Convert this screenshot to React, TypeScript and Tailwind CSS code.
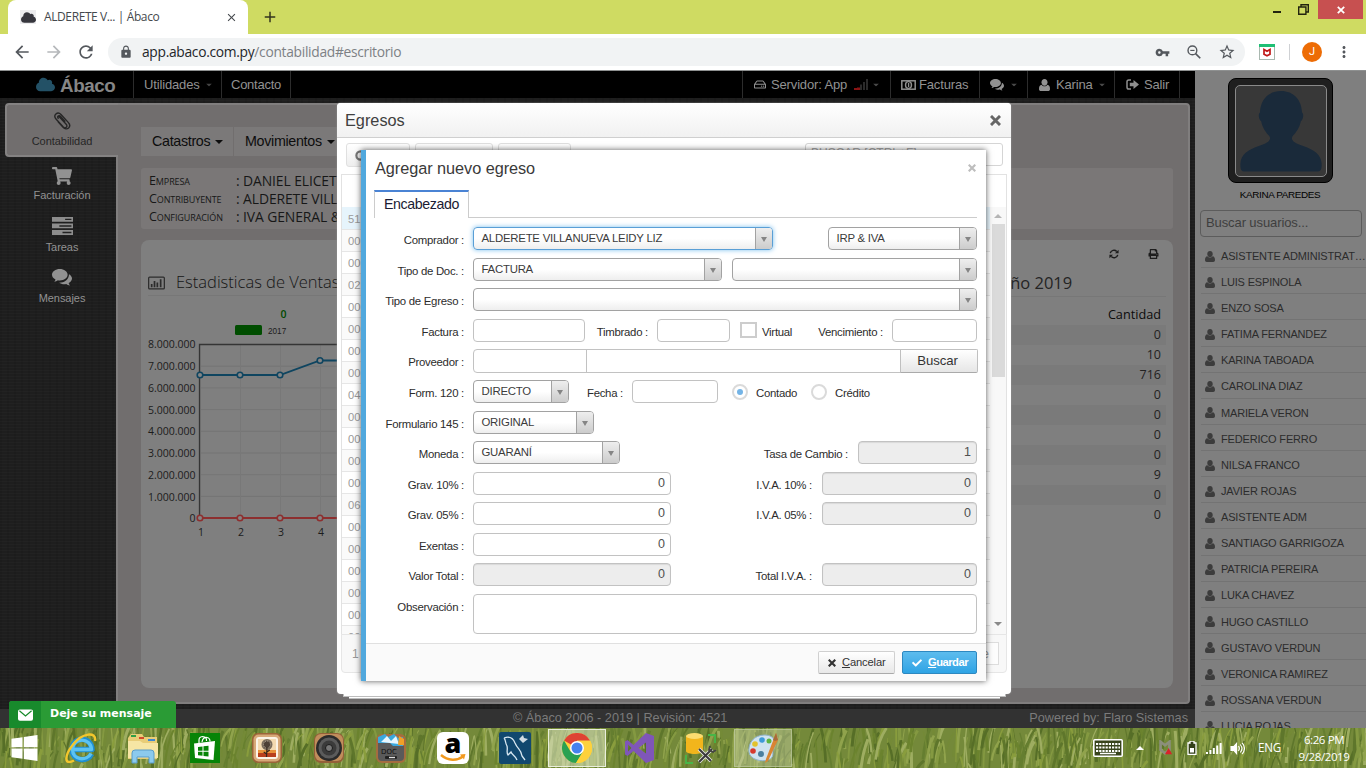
import React from "react";
import {
  MdArrowBack,
  MdArrowForward,
  MdRefresh,
  MdLock,
  MdVpnKey,
  MdStarBorder,
  MdMoreVert,
  MdClose,
  MdAdd,
} from "react-icons/md";
import { FaCloud, FaShoppingCart, FaRegHdd, FaPrint, FaCheck, FaAmazon } from "react-icons/fa";

const linen =
  "bg-[#1e1e1e] bg-[repeating-linear-gradient(0deg,rgba(255,255,255,0.02)_0_1px,transparent_1px_3px),repeating-linear-gradient(90deg,rgba(0,0,0,0.08)_0_2px,transparent_2px_7px)]";

function Caret({ className = "" }: { className?: string }) {
  return (
    <svg viewBox="0 0 8 4" className={`h-[4px] w-[8px] shrink-0 ${className}`}>
      <path d="M0 0h8L4 4z" fill="currentColor" />
    </svg>
  );
}

/* Thick cross with blunt corners */
function Cross({ className = "" }: { className?: string }) {
  return (
    <svg viewBox="0 0 12 12" className={className}>
      <path d="M2.2 2.2l7.6 7.6M9.8 2.2L2.2 9.8" stroke="currentColor" strokeWidth="3.2" strokeLinecap="square" />
    </svg>
  );
}

function UserIcon({ className = "" }: { className?: string }) {
  return (
    <svg viewBox="0 0 11 12" className={className} fill="currentColor">
      <path d="M5.500 0C7.300 0 8.500 1.300 8.500 3.200S7.300 6.700 5.500 6.700 2.500 5.100 2.500 3.200 3.700 0 5.500 0z" />
      <path d="M2.600 5.700C.8 5.900 0 7.500 0 9.900 0 11.200.8 12 2 12h7c1.200 0 2-.8 2-2.100 0-2.400-.8-4-2.600-4.200C7.600 6.700 6.700 7.200 5.500 7.200s-2.100-.5-2.900-1.500z" />
    </svg>
  );
}

function ChatIcon({ className = "" }: { className?: string }) {
  return (
    <svg viewBox="0 0 20 17" className={className} fill="currentColor">
      <path d="M7.800 0c4.300 0 7.800 2.500 7.800 5.700s-3.500 5.700-7.800 5.700c-.7 0-1.300-.1-1.900-.2-1 .8-2.300 1.400-3.700 1.500.7-.7 1.100-1.400 1.300-2.300C1.400 9.300 0 7.600 0 5.700 0 2.500 3.500 0 7.800 0z" />
      <path d="M17 5.200c1.800 1 3 2.600 3 4.400 0 1.900-1.300 3.500-3.400 4.500.2.900.7 1.700 1.400 2.400-1.500-.1-2.800-.7-3.800-1.500-.6.1-1.200.2-1.900.2-2 0-3.900-.6-5.200-1.500C12.400 13.700 17 10.300 17 5.200z" />
    </svg>
  );
}

/* ---------------- Browser ---------------- */

function Browser() {
  return (
    <header className="h-[70px] shrink-0">
      <div className="flex h-[34px] items-start bg-[#cfdb62]">
        <div className="ml-2 flex h-[34px] w-[240px] items-center rounded-t-lg bg-white">
          <span className="ml-[12px] flex h-[14px] w-[16px] items-center justify-center bg-[#ececee]">
            <FaCloud className="h-[15px] w-[15px] text-[#36363d]" />
          </span>
          <span className="ml-[8px] w-[171px] font-['Open_Sans',sans-serif] text-[12px] tracking-[-0.4px] text-[#45494d]">
            ALDERETE V... | Ábaco
          </span>
          <MdClose className="ml-[10px] h-[13px] w-[13px] text-[#45494d]" />
        </div>
        <MdAdd className="mt-[8px] ml-[13px] h-[18px] w-[18px] text-[#34361e]" />
        <div className="ml-auto flex h-[19px] items-center">
          <span className="mt-[5px] h-[2px] w-[8px] bg-[#22240f]" />
          <svg viewBox="0 0 11 11" className="ml-[17px] h-[11px] w-[11px]">
            <path d="M3 3V.7h7.3V8H8M.7 3h7.2v7.2H.7z" fill="none" stroke="#22240f" strokeWidth="1.4" />
          </svg>
          <span className="ml-[9px] flex h-[19px] w-[45px] items-center justify-center bg-[#c75050] text-white">
            <svg viewBox="0 0 8 8" className="h-[8px] w-[8px]">
              <path d="M.8.8l6.4 6.4M7.2.8L.8 7.2" stroke="#fff" strokeWidth="1.8" />
            </svg>
          </span>
          <span className="w-[3px]" />
        </div>
      </div>
      <div className="flex h-[36px] items-center bg-white text-[#54585d]">
        <MdArrowBack className="ml-[12px] h-[20px] w-[20px]" />
        <MdArrowForward className="ml-[12px] h-[20px] w-[20px] text-[#b5b8bb]" />
        <MdRefresh className="ml-[12px] h-[20px] w-[20px]" />
        <div className="ml-[12px] flex h-[28px] w-[1137px] items-center rounded-full bg-[#f1f3f4]">
          <MdLock className="ml-[11px] h-[14px] w-[14px]" />
          <span className="ml-[9px] font-['Open_Sans',sans-serif] text-[13.800px] tracking-[-0.3px] text-[#232629]">
            app.abaco.com.py<span className="text-[#7d8185]">/contabilidad#escritorio</span>
          </span>
          <MdVpnKey className="ml-auto h-[15px] w-[15px]" />
          <svg viewBox="0 0 15 15" className="ml-[17px] h-[14px] w-[14px]" fill="none" stroke="currentColor">
            <circle cx="5.800" cy="5.800" r="4.700" strokeWidth="1.500" />
            <path d="M9.200 9.200l5 5" strokeWidth="1.800" />
            <path d="M3.500 5.800h4.600" strokeWidth="1.200" />
          </svg>
          <MdStarBorder className="mr-[9px] ml-[17px] h-[18px] w-[18px]" />
        </div>
        <svg viewBox="0 0 16 16" className="ml-[14px] h-[16px] w-[16px]">
          <rect x=".5" y=".5" width="15" height="15" fill="#fff" stroke="#a9b8b0" />
          <rect width="16" height="3" fill="#1fbf75" />
          <path d="M5 5.500v4.700l3 1.600 3-1.600V5.500L8 7.200z" fill="none" stroke="#c01818" strokeWidth="1.700" />
        </svg>
        <span className="ml-[14px] h-[16px] w-px bg-[#cfd1d4]" />
        <span className="ml-[12px] flex h-[20px] w-[20px] items-center justify-center rounded-full bg-[#ed6c05] font-['Roboto',sans-serif] text-[11px] text-white">
          J
        </span>
        <MdMoreVert className="ml-[13px] h-[18px] w-[18px]" />
      </div>
    </header>
  );
}

/* ---------------- Application shell ---------------- */

const navCell = "flex h-full items-center border-l border-[#2c2c2c]";

function TopBar() {
  return (
    <nav className="flex h-[27px] shrink-0 items-center bg-black text-[13px] tracking-[-0.15px] text-[#929292]">
      <FaCloud className="ml-[36px] h-[19px] w-[19px] text-[#235166]" />
      <span className="mt-[4px] ml-[5px] w-[73px] text-[18.800px] font-bold tracking-[-0.4px] text-[#868686]">Ábaco</span>
      <div className={`${navCell} w-[88px] pl-[10px]`}>
        Utilidades
        <Caret className="ml-[5px] scale-75 text-[#444]" />
      </div>
      <div className={`${navCell} w-[69px] pl-[9px] tracking-[-0.25px]`}>Contacto</div>
      <div className={`${navCell} w-[452px]`} />
      <div className={`${navCell} w-[148px] pl-[11px]`}>
        <FaRegHdd className="h-[13px] w-[12px]" />
        <span className="ml-[5px]">Servidor: App</span>
        <svg viewBox="0 0 14 11" className="ml-[7px] h-[11px] w-[14px]">
          <path d="M0 11V9h3v2zM3 11V8.500h3V11z" fill="#8a1414" />
          <path d="M6 11V5.500h2V11zM9 11V3h2v8zM12 11V0h2v11z" fill="#2b2b2b" />
        </svg>
        <Caret className="ml-[4px] scale-75 text-[#4a4a4a]" />
      </div>
      <div className={`${navCell} w-[89px] pl-[10px]`}>
        <svg viewBox="0 0 15 10" className="h-[10px] w-[15px]">
          <rect x=".8" y=".8" width="13.400" height="8.400" fill="none" stroke="#8f8f8f" strokeWidth="1.500" />
          <ellipse cx="7.500" cy="5" rx="3.700" ry="4" fill="#8f8f8f" />
          <ellipse cx="7.500" cy="5" rx="2.200" ry="2.800" fill="#000" />
          <path d="M7.600 3v4" stroke="#8f8f8f" strokeWidth="1.300" />
        </svg>
        <span className="ml-[3px]">Facturas</span>
      </div>
      <div className={`${navCell} w-[48px] pl-[10px]`}>
        <ChatIcon className="h-[12px] w-[14px]" />
        <Caret className="ml-[6px] scale-75 text-[#4a4a4a]" />
      </div>
      <div className={`${navCell} w-[87px] pl-[11px]`}>
        <UserIcon className="h-[12px] w-[11px]" />
        <span className="ml-[6px]">Karina</span>
        <Caret className="ml-[5px] scale-75 text-[#4a4a4a]" />
      </div>
      <div className={`${navCell} w-[65px] pl-[11px]`}>
        <svg viewBox="0 0 13 11" className="h-[11px] w-[13px]">
          <path d="M5 .9H2.800Q1 .9 1 2.700v5.600q0 1.800 1.800 1.800H5" fill="none" stroke="#8f8f8f" strokeWidth="1.500" />
          <path d="M3.800 3.800h3.700V1L13 5.500 7.500 10V7.300H3.800z" fill="#8f8f8f" />
        </svg>
        <span className="ml-[5px]">Salir</span>
      </div>
      <div className={navCell} />
    </nav>
  );
}

function SideNav() {
  const item = "flex flex-col items-center text-[11px] tracking-[-0.05px]";
  return (
    <aside className="flex w-[111px] shrink-0 flex-col text-[#929292]">
      <div className={`${item} relative z-10 -mr-[2px] h-[54px] rounded-l-[4px] border-2 border-r-0 border-[#848282] bg-[#716e6e] pt-[7px] pr-[1px] text-[#262626]`}>
        <svg viewBox="0 0 18 18" className="h-[18px] w-[18px]" fill="none" stroke="#262626" strokeWidth="1.400" strokeLinecap="round">
          <path d="M6 4.500l7.200 7.800c1 1.100.9 2.300.1 3s-2 .7-3-.3L3.200 7.200C1.600 5.400 1.500 3.300 2.900 2s3.500-1.200 5.100.5l7.200 7.900c1.900 2 1.700 4.300.4 5.600-1.400 1.300-3.800 1.300-5.500-.6L5.300 10M5.200 6.200C4.500 5.300 4.700 4.500 5.200 4s1.400-.5 2.100.3l4.500 5" />
        </svg>
        <span className="mt-[3px]">Contabilidad</span>
      </div>
      <div className={`${item} mt-[10px] pl-[3px]`}>
        <FaShoppingCart className="h-[18px] w-[20px]" />
        <span className="mt-[2px]">Facturación</span>
      </div>
      <div className={`${item} mt-[13px] pl-[3px]`}>
        <svg viewBox="0 0 20 17" className="h-[18px] w-[21px]" fill="#8d8d8d">
          <path d="M0 0h20v4.500H0zM0 6.200h20v4.500H0zM0 12.400h20V17H0z" />
          <path d="M12.500 1.600h6v1.300h-6zM7 7.800h11.500v1.300H7zM10 14h8.500v1.300H10z" fill="#222" />
        </svg>
        <span className="mt-[4px]">Tareas</span>
      </div>
      <div className={`${item} mt-[14px] pl-[3px]`}>
        <ChatIcon className="h-[17px] w-[20px]" />
        <span className="mt-[4px]">Mensajes</span>
      </div>
    </aside>
  );
}

function SalesChart() {
  const ticks = ["8.000.000", "7.000.000", "6.000.000", "5.000.000", "4.000.000", "3.000.000", "2.000.000", "1.000.000", "0"];
  const xs = [59, 99, 139, 179];
  return (
    <svg viewBox="0 0 230 240" className="mt-[7px] h-[240px] w-[230px]" fontFamily="Open Sans, sans-serif" fontSize="10.500" fill="#1c1c1c">
      <text x="139.500" y="15" fill="#004a00" fontWeight="600">0</text>
      <rect x="94" y="22" width="27" height="10" rx="1.500" fill="#004d00" />
      <text x="127" y="31" fontSize="8.200" fontFamily="Liberation Sans">2017</text>
      {ticks.map((t, i) => (
        <g key={t}>
          <text x="54.500" y={45.300 + i * 21.750} textAnchor="end">{t}</text>
          <path d={`M59 ${41.500 + i * 21.700}H230`} stroke="#757575" strokeWidth="1" />
        </g>
      ))}
      {xs.map((x, i) => (
        <g key={x}>
          <path d={`M${x + 0.5} 41v174`} stroke="#787878" />
          <text x={x + 1} y="233" textAnchor="middle">{i + 1}</text>
        </g>
      ))}
      <path d="M230 41.500H58.500V215" fill="none" stroke="#353535" strokeWidth="1.300" />
      <path d="M59 72h80l40-14.500h51" fill="none" stroke="#0f4560" strokeWidth="1.800" />
      <path d="M59 215h171" stroke="#8d2f2f" strokeWidth="1.800" />
      {xs.map((x, i) => (
        <g key={x} fill="#858585" strokeWidth="1.600">
          <circle cx={x} cy={i === 3 ? 57.5 : 72} r="2.800" stroke="#0f4560" />
          <circle cx={x} cy="215" r="2.800" stroke="#8d2f2f" />
        </g>
      ))}
    </svg>
  );
}

function BarChartIcon() {
  return (
    <svg viewBox="0 0 18 14" className="h-[14px] w-[17px] shrink-0">
      <rect x=".7" y=".7" width="16.600" height="12.600" rx="1" fill="none" stroke="#2c2c2c" strokeWidth="1.300" />
      <path d="M3 8h1.800v3.500H3zM6 5h1.800v6.500H6zM9 6.500h1.800v5H9zM12.500 3h1.800v8.500h-1.800z" fill="#2c2c2c" />
    </svg>
  );
}

function RefreshIcon() {
  return (
    <svg viewBox="0 0 12 12" className="h-[10px] w-[10px]">
      <path d="M1.500 5A4.600 4.600 0 0 1 9.300 2.900M10.500 7A4.600 4.600 0 0 1 2.700 9.100" fill="none" stroke="#1d1d1d" strokeWidth="1.700" />
      <path d="M11.500.8v4.300H7.200zM.5 11.200V6.900h4.300z" fill="#1d1d1d" />
    </svg>
  );
}

const counts = ["0", "10", "716", "0", "0", "0", "0", "9", "0", "0"];
const info = [
  ["Empresa", "DANIEL ELICET"],
  ["Contribuyente", "ALDERETE VILL"],
  ["Configuración", "IVA GENERAL &"],
];

function Dashboard() {
  return (
    <main className="flex h-[601px] w-[1074px] flex-col rounded-r-[4px] border-2 border-[#807e7e] bg-[#716e6e] pt-[22px] pl-[23px]">
      <div className="flex h-[29px] gap-px text-[14.300px] tracking-[-0.32px] text-[#0d0d0d]">
        <span className="flex w-[92px] items-center bg-[#7b7979] pl-[11px]">
          Catastros <Caret className="ml-[5px]" />
        </span>
        <span className="flex w-[104px] items-center bg-[#7b7979] pl-[11px]">
          Movimientos <Caret className="ml-[5px]" />
        </span>
      </div>
      <div className="mt-[12px] flex h-[61px] w-[1032px] flex-col rounded-[3px] bg-[#7a7777] pt-[4px] pl-[8px] font-['Open_Sans',sans-serif] text-[13.900px] tracking-[-0.1px] text-[#171717]">
        {info.map(([k, v]) => (
          <div key={k} className="flex h-[18px] items-center whitespace-nowrap">
            <span className="w-[87px] text-[12.500px] [font-variant:small-caps]">{k}</span>
            <span>: {v}</span>
          </div>
        ))}
      </div>
      <section className="mt-[11px] flex h-[448px] w-[1032px] justify-between rounded-[8px] bg-[#7f7f7f]">
        <div className="flex w-[230px] flex-col">
          <div className="mt-[30px] ml-[7px] flex h-[26px] items-center border-b border-[#777] font-['Open_Sans',sans-serif] text-[16.500px] font-light whitespace-nowrap text-[#161616]">
            <BarChartIcon />
            <span className="ml-[11px]">Estadisticas de Ventas</span>
          </div>
          <SalesChart />
        </div>
        <div className="flex w-[172px] flex-col pr-[7px] font-['Open_Sans',sans-serif]">
          <div className="mt-[7px] flex h-[14px] items-center justify-end gap-[29px] pr-[7px]">
            <RefreshIcon />
            <FaPrint className="h-[10px] w-[11px] text-[#1d1d1d]" />
          </div>
          <div className="mt-[9px] flex h-[27px] items-center border-b border-[#777] text-[16.500px] text-[#242424]">año 2019</div>
          <div className="mt-[8px] flex h-[20px] items-center justify-end pr-[5px] text-[12.700px] text-[#0c0c0c]">Cantidad</div>
          {counts.map((c, i) => (
            <div
              key={i}
              className={`flex h-[20px] items-center justify-end pr-[5px] text-[12.500px] text-[#222] ${i % 2 ? "" : "bg-[#7a7a7a]"}`}
            >
              {c}
            </div>
          ))}
        </div>
      </section>
    </main>
  );
}

const users = [
  "ASISTENTE ADMINISTRAT…",
  "LUIS ESPINOLA",
  "ENZO SOSA",
  "FATIMA FERNANDEZ",
  "KARINA TABOADA",
  "CAROLINA DIAZ",
  "MARIELA VERON",
  "FEDERICO FERRO",
  "NILSA FRANCO",
  "JAVIER ROJAS",
  "ASISTENTE ADM",
  "SANTIAGO GARRIGOZA",
  "PATRICIA PEREIRA",
  "LUKA CHAVEZ",
  "HUGO CASTILLO",
  "GUSTAVO VERDUN",
  "VERONICA RAMIREZ",
  "ROSSANA VERDUN",
  "LUCIA ROJAS",
];

function Users() {
  return (
    <aside className="flex h-full w-[171px] flex-col overflow-hidden bg-[#7f7f7f]">
      <div className="mt-[7px] ml-[33px] flex h-[105px] w-[105px] shrink-0 items-center justify-center rounded-[8px] border border-black bg-[#1f1f1f]">
        <svg viewBox="0 0 92 92" className="h-[92px] w-[92px] overflow-hidden rounded-[5px] border border-[#8a8a8a] bg-[#383838]">
          <path
            d="M46 5c13 0 21 9 21.500 22 2 1 1.500 7-1.200 9-1.500 7-4.500 11-8.300 15-3 5 3 8 10 10 12 4 19 9 19.500 18 .3 7-1 8.500-5 8.500H9.500c-4 0-5.300-1.500-5-8.500C5 70 12 65 24 61c7-2 13-5 10-10-3.800-4-6.800-8-8.300-15-2.700-2-3.200-8-1.200-9C25 14 33 5 46 5z"
            fill="#1a2a3a"
          />
        </svg>
      </div>
      <span className="mt-[5px] h-[13px] shrink-0 pr-[1px] text-center text-[9.900px] leading-[13px] tracking-[-0.35px] text-black">KARINA PAREDES</span>
      <span className="mt-[9px] ml-[5px] flex h-[27px] w-[162px] shrink-0 items-center rounded-[4px] border border-[#5c5c5c] bg-[#7f7f7f] pb-[2px] pl-[5px] text-[13px] tracking-[-0.1px] text-[#3e3e3e]">
        Buscar usuarios...
      </span>
      <ul className="mt-[5px]">
        {users.map((u) => (
          <li key={u} className="ml-[6px] flex h-[26.130px] items-center border-b border-[#737373] pt-[3px] pl-[4px] text-[11px] tracking-[-0.17px] whitespace-nowrap text-[#2c2c2c]">
            <UserIcon className="h-[11px] w-[10px] shrink-0 text-[#3c3c3c]" />
            <span className="ml-[6px]">{u}</span>
          </li>
        ))}
      </ul>
    </aside>
  );
}

/* ---------------- Dialogs ---------------- */

const egresoRows = ["51", "00", "00", "02", "00", "00", "00", "00", "04", "00", "00", "00", "00", "06", "00", "00", "00", "00", "00", "00"];

function EgresosDialog() {
  const btn = "h-[24px] rounded-[3px] border border-[#e0e0e0] bg-gradient-to-b from-white to-[#eeeeee]";
  return (
    <div className="absolute top-[103px] left-[337px] flex w-[674px] flex-col items-center">
      <div className="flex h-[591px] w-full flex-col rounded-[4px] bg-white shadow-[0_0_2px_#999]">
        <div className="flex h-[35px] shrink-0 items-center justify-between rounded-t-[4px] border-b border-[#cfcfcf] bg-gradient-to-b from-white to-[#f1f1f1] pr-[10px] pl-[8px]">
          <span className="text-[16.300px] text-[#404040]">Egresos</span>
          <Cross className="h-[11px] w-[11px] text-[#666]" />
        </div>
        <div className="mt-[5px] flex h-[24px] px-[9px]">
          <span className={`${btn} flex w-[64px] items-center pl-[8px]`}>
            <svg viewBox="0 0 12 12" className="h-[11px] w-[11px]">
              <circle cx="6" cy="6" r="4.500" fill="none" stroke="#777" strokeWidth="2.400" />
            </svg>
          </span>
          <span className={`${btn} ml-[5px] w-[78px]`} />
          <span className={`${btn} ml-[5px] w-[73px]`} />
          <span className="mr-[-1px] ml-auto flex h-[23px] w-[198px] items-center rounded-[3px] border border-[#d5d5d5] pb-[4px] pl-[5px] text-[12px] text-[#aaa]">
            BUSCAR [CTRL+F]
          </span>
        </div>
        <div className="mt-[7px] ml-[4px] flex h-[461px] w-[666px] flex-col overflow-hidden border border-[#e2e2e2]">
          <div className="h-[32px] shrink-0" />
          <div className="flex h-[427px] overflow-hidden">
            <div className="w-[648px] text-[11.200px] text-[#9a9a9a]">
              {egresoRows.map((r, i) => (
                <div
                  key={i}
                  className={`flex items-center border-b border-[#e6e6e6] pt-[2px] pl-[6px] ${i === 0 ? "h-[23px] bg-[#e6f4fc]" : "h-[22px]"} ${i % 2 && i ? "bg-[#fafafa]" : ""}`}
                >
                  {r}
                </div>
              ))}
            </div>
            <div className="flex w-[16px] flex-col items-center bg-[#f8f8f8]">
              <Caret className="mt-[7px] rotate-180 text-[#b5b5b5]" />
              <div className="mt-[6px] h-[153px] w-[13px] bg-[#dadada]" />
              <Caret className="mt-auto mb-[8px] text-[#8a8a8a]" />
            </div>
          </div>
        </div>
        <div className="-mt-px ml-[4px] flex h-[39px] w-[666px] items-center justify-between rounded-b-[4px] border border-[#e6e6e6] bg-[#f8f8f8] pr-[7px] pl-[10px] text-[12px] text-[#999]">
          <span>1</span>
          <span className="flex h-[23px] w-[60px] items-center justify-end border border-[#ddd] bg-[#fdfdfd] pr-[9px] text-[12px]">e</span>
        </div>
      </div>
      <div className="h-[3px] w-[663px] border-x border-b border-[#bdbdbd] bg-white" />
      <div className="h-[2px] w-[651px] border-b border-[#bdbdbd] bg-white" />
    </div>
  );
}

function Label({ children, className = "w-[98px] mr-[9px]" }: { children: React.ReactNode; className?: string }) {
  return (
    <span className={`shrink-0 pt-[2.500px] text-right text-[11.400px] leading-[20px] tracking-[-0.28px] whitespace-nowrap text-[#2c2c2c] ${className}`}>
      {children}
    </span>
  );
}

function Select({ value = "", className, focus = false }: { value?: string; className: string; focus?: boolean }) {
  return (
    <span
      className={`flex h-[23px] shrink-0 overflow-hidden rounded-[4px] border bg-gradient-to-b from-white from-50% to-[#eeeeee] ${
        focus ? "border-[#5a9fd6] shadow-[0_0_5px_#7cc0ee]" : "border-[#a2a2a2]"
      } ${className}`}
    >
      <span className="flex-1 pl-[7.500px] text-[11.400px] leading-[21px] tracking-[-0.24px] whitespace-nowrap text-[#3c3c3c]">{value}</span>
      <span className="flex w-[17px] items-center justify-center border-l border-[#a2a2a2] bg-gradient-to-b from-[#eee] to-[#ccc]">
        <svg viewBox="0 0 6 5" className="mt-[2px] h-[5px] w-[6px]">
          <path d="M0 0h6L3 5z" fill="#858585" />
        </svg>
      </span>
    </span>
  );
}

function Field({ value = "", className, off = false }: { value?: string; className: string; off?: boolean }) {
  return (
    <span
      className={`h-[23px] shrink-0 rounded-[4px] border border-[#c2c2c2] pr-[5px] text-right text-[12.500px] leading-[20px] text-[#505050] ${
        off ? "bg-[#ededed] shadow-[inset_0_1px_1px_#d9d9d9]" : "bg-white"
      } ${className}`}
    >
      {value}
    </span>
  );
}

function Row({ h, children }: { h: string; children: React.ReactNode }) {
  return <div className={`flex items-start ${h}`}>{children}</div>;
}

function NuevoEgreso() {
  const btn = "flex h-[23px] items-center rounded-[2px] border text-[11.200px] tracking-[-0.150px]";
  return (
    <div className="absolute top-[150px] left-[361px] flex h-[531px] w-[625px] flex-col border-l-[5px] border-[#51a8dd] bg-white shadow-[0_0_6px_rgba(0,0,0,0.65)]">
      <div className="flex h-[40px] shrink-0 items-center justify-between pr-[10px] pl-[9px]">
        <span className="mt-[-3px] text-[16.300px] tracking-[-0.05px] text-[#3a3a3a]">Agregar nuevo egreso</span>
        <Cross className="mt-[-4px] h-[8px] w-[8px] text-[#bdbdbd]" />
      </div>
      <div className="mr-[9px] ml-[8px] flex h-[28px] shrink-0 border-b border-[#ccc]">
        <span className="h-[28px] w-[95px] border-x border-t-2 border-x-[#ccc] border-t-[#4a83d4] bg-white text-center text-[14.200px] leading-[25px] tracking-[-0.38px] text-[#1b1b33]">
          Encabezado
        </span>
      </div>
      <div className="mt-[9px] flex h-[416px] shrink-0 flex-col">
        <Row h="h-[31px]">
          <Label>Comprador :</Label>
          <Select focus value="ALDERETE VILLANUEVA LEIDY LIZ" className="w-[300px]" />
          <Select value="IRP & IVA" className="ml-[55px] w-[149px]" />
        </Row>
        <Row h="h-[30px]">
          <Label>Tipo de Doc. :</Label>
          <Select value="FACTURA" className="w-[249px]" />
          <Select className="ml-[10px] w-[245px]" />
        </Row>
        <Row h="h-[31px]">
          <Label>Tipo de Egreso :</Label>
          <Select className="w-[504px]" />
        </Row>
        <Row h="h-[30px]">
          <Label>Factura :</Label>
          <Field className="w-[112px]" />
          <Label className="mr-[9px] w-[63px]">Timbrado :</Label>
          <Field className="w-[73px]" />
          <span className="mt-[3px] ml-[10px] h-[16px] w-[17px] border-2 border-[#cdcdcd] bg-white" />
          <Label className="ml-[5px]">Virtual</Label>
          <Label className="mr-[9px] ml-auto">Vencimiento :</Label>
          <Field className="mr-[9px] w-[85px]" />
        </Row>
        <Row h="h-[31px]">
          <Label>Proveedor :</Label>
          <Field className="h-[24px] w-[114px] rounded-r-none" />
          <Field className="-ml-px h-[24px] w-[315px] rounded-none" />
          <span className="-ml-px h-[24px] w-[78px] rounded-r-[2px] border border-[#c0c0c0] border-b-[#aaa] bg-gradient-to-b from-white to-[#e6e6e6] pr-[3px] text-center text-[13.200px] leading-[21px] tracking-[-0.1px] text-[#333]">
            Buscar
          </span>
        </Row>
        <Row h="h-[31px]">
          <Label>Form. 120 :</Label>
          <Select value="DIRECTO" className="w-[96px]" />
          <Label className="mr-[9px] w-[54px]">Fecha :</Label>
          <Field className="w-[86px]" />
          <span className="mt-[4px] ml-[14px] flex h-[16px] w-[16px] items-center justify-center rounded-full border-2 border-[#dadada]">
            <span className="h-[6px] w-[6px] rounded-full bg-[#74b4e6]" />
          </span>
          <Label className="ml-[8px]">Contado</Label>
          <span className="mt-[4px] ml-[14px] h-[16px] w-[16px] rounded-full border-2 border-[#dadada]" />
          <Label className="ml-[8px]">Crédito</Label>
        </Row>
        <Row h="h-[30px]">
          <Label>Formulario 145 :</Label>
          <Select value="ORIGINAL" className="w-[121px]" />
        </Row>
        <Row h="h-[31px]">
          <Label>Moneda :</Label>
          <Select value="GUARANÍ" className="w-[147px]" />
          <Label className="mr-[10px] ml-auto">Tasa de Cambio :</Label>
          <Field off value="1" className="mr-[9px] w-[119px]" />
        </Row>
        <Row h="h-[30px]">
          <Label>Grav. 10% :</Label>
          <Field value="0" className="w-[198px]" />
          <Label className="mr-[10px] ml-auto">I.V.A. 10% :</Label>
          <Field off value="0" className="mr-[9px] w-[155px]" />
        </Row>
        <Row h="h-[31px]">
          <Label>Grav. 05% :</Label>
          <Field value="0" className="w-[198px]" />
          <Label className="mr-[10px] ml-auto">I.V.A. 05% :</Label>
          <Field off value="0" className="mr-[9px] w-[155px]" />
        </Row>
        <Row h="h-[30px]">
          <Label>Exentas :</Label>
          <Field value="0" className="w-[198px]" />
        </Row>
        <Row h="h-[31px]">
          <Label>Valor Total :</Label>
          <Field off value="0" className="w-[198px]" />
          <Label className="mr-[10px] ml-auto">Total I.V.A. :</Label>
          <Field off value="0" className="mr-[9px] w-[155px]" />
        </Row>
        <Row h="h-[49px]">
          <Label>Observación :</Label>
          <Field className="h-[40px] w-[504px]" />
        </Row>
      </div>
      <div className="flex h-[38px] shrink-0 items-center justify-end gap-[7px] border-t border-[#e0e0e0] bg-[#fafafa] pr-[9px]">
        <span className={`${btn} w-[77px] border-[#d0d0d0] border-b-[#aaa] bg-gradient-to-b from-white to-[#e8e8e8] pl-[9px] text-[#333]`}>
          <Cross className="mr-[6px] h-[8px] w-[8px]" />
          <span className="underline">C</span>ancelar
        </span>
        <span className={`${btn} w-[75px] border-[#2d88c0] bg-gradient-to-b from-[#5cbcee] to-[#2da3e4] pl-[9px] font-bold tracking-[-0.500px] text-white`}>
          <FaCheck className="mr-[6px] h-[10px] w-[10px]" />
          <span className="underline">G</span>uardar
        </span>
      </div>
    </div>
  );
}

/* ---------------- Taskbar ---------------- */

const grassTones = ["#4a6420", "#5f7a2c", "#8ba045", "#9dae55", "#748b36", "#b0bd72", "#566e26", "#93a63f", "#68812a"];

function Grass() {
  let seed = 17;
  const rnd = () => {
    seed = (seed * 16807) % 2147483647;
    return seed / 2147483647;
  };
  const blades = Array.from({ length: 1100 }, (_, i) => {
    const x = rnd() * 1380 - 5;
    const y = rnd() * 34 + 18;
    const lean = (rnd() - 0.35) * 18;
    const h = 14 + rnd() * 28;
    return (
      <path
        key={i}
        d={`M${x.toFixed(1)} ${y.toFixed(1)}q${(lean * 0.2).toFixed(1)} ${(-h * 0.6).toFixed(1)} ${lean.toFixed(1)} ${(-h).toFixed(1)}`}
        stroke={grassTones[Math.floor(rnd() * grassTones.length)]}
        strokeWidth={(1 + rnd() * 2.2).toFixed(1)}
      />
    );
  });
  return (
    <svg viewBox="0 0 1366 40" className="absolute inset-0 h-[40px] w-[1366px]" fill="none" opacity="0.7">
      {blades}
    </svg>
  );
}

function Tile({ children, open = "" }: { children: React.ReactNode; open?: string }) {
  return (
    <span className="flex h-[40px] w-[62px] items-center justify-center">
      <span className={`flex h-[38px] w-[58px] items-center justify-center ${open}`}>{children}</span>
    </span>
  );
}

const big = "h-[32px] w-[32px]";

function Taskbar() {
  return (
    <footer className="relative h-[40px] shrink-0 overflow-hidden bg-[#74893a]">
      <Grass />
      <div className="relative flex h-full items-center">
        <span className="flex w-[50px] pl-[11px]">
          <svg viewBox="0 0 26 26" className="h-[26px] w-[27px]" fill="#fff">
            <path d="M0 3.800L11 2.200v10.100H0zM12.300 2L26 0v12.300H12.300zM0 13.500h11v10.300L0 22.200zM12.300 13.500H26V26l-13.700-2z" />
          </svg>
        </span>
        <Tile>
          <svg viewBox="0 0 32 32" className={big} fill="none">
            <path d="M8 17.500H27C27 4 7 4 7 17.500c0 12 16 13 19.500 4.500" stroke="#1f8fd2" strokeWidth="5.400" strokeLinejoin="round" />
            <path d="M9 17.500H26.500C26 5 7.500 5 7.500 17.500c0 11 14.500 12 18.500 4" stroke="#5cc3f2" strokeWidth="3.400" strokeLinejoin="round" />
            <path d="M30 9c2-10-13-8-22 3.500S-1 34 9 28.500" stroke="#f3c62c" strokeWidth="2.400" />
          </svg>
        </Tile>
        <Tile>
          <svg viewBox="0 0 32 32" className={big}>
            <path d="M1 6l3-4h11l2 3h13v22H1z" fill="#e8cd77" />
            <path d="M4 3h5v2H4z" fill="#2e9e46" />
            <path d="M12 5h5v2h-5z" fill="#d14a2a" />
            <path d="M21 7h7v2h-7z" fill="#3f88cf" />
            <path d="M1 9h12l3 2h15v15H1z" fill="#f6e6a4" />
            <path d="M5 31V21q0-3 3-3h16q3 0 3 3v10h-5v-6H10v6z" fill="#8ccaed" stroke="#5a9cc8" />
          </svg>
        </Tile>
        <Tile>
          <svg viewBox="0 0 30 30" className="h-[30px] w-[30px]">
            <path d="M0 0h30v30H0z" fill="#078407" />
            <path d="M9 10V7q0-3 3.500-3.500Q17 4 16.500 8M12 9q1-5 5-4.500 3 .5 3 4" fill="none" stroke="#fff" strokeWidth="1.200" />
            <path d="M4 10.500l21-2.500-1.500 19L5 25z" fill="#fff" />
            <path d="M8 14l4.500-.5v4.300H8zM13.500 13.300l5-.5v5h-5zM8 18.700h4.500v4L8 22.300zM13.500 18.700h5v4.700l-5-.5z" fill="#078407" />
          </svg>
        </Tile>
        <Tile>
          <svg viewBox="0 0 30 30" className="h-[30px] w-[30px]">
            <rect width="30" height="30" rx="6" fill="#9b6438" />
            <rect x="1.500" y="1.500" width="27" height="27" rx="5" fill="#d7a878" />
            <rect x="4" y="4" width="22" height="22" rx="3" fill="#fbf3e6" />
            <rect x="6" y="6" width="18" height="18" fill="#f3d9b0" />
            <path d="M6 17h18v4H6z" fill="#e8923a" />
            <path d="M6 20h18v4H6z" fill="#b8401d" />
            <circle cx="15" cy="11.500" r="5.500" fill="#7a6c5c" />
            <circle cx="15" cy="11.500" r="3.500" fill="#4d4036" strokeDasharray="1 1" stroke="#b9ad9b" />
            <path d="M15 14l-.5 10M14.800 19l3-2M14.700 21l-3-2" stroke="#32251d" strokeWidth="1.200" />
          </svg>
        </Tile>
        <Tile>
          <svg viewBox="0 0 30 30" className="h-[30px] w-[30px]">
            <rect width="30" height="30" rx="7" fill="#946038" />
            <rect x="1" y="1" width="28" height="27" rx="6" fill="#c08d5c" />
            <circle cx="15" cy="15" r="13" fill="#2b2b2b" />
            <circle cx="15" cy="15" r="10.500" fill="#5b5b5b" />
            <circle cx="15" cy="15" r="7.500" fill="#3b3b3b" />
            <circle cx="15" cy="15" r="3.500" fill="#777" stroke="#1a1a1a" />
          </svg>
        </Tile>
        <Tile>
          <svg viewBox="0 0 30 30" className="h-[30px] w-[30px]">
            <rect y="1" width="30" height="29" rx="6" fill="#a56c3f" />
            <path d="M2 4l7-3 3 3 6-3 4 4 5-1v10H2z" fill="#3ba8dd" />
            <path d="M5 9l6-6 4 5 5-5 3 8z" fill="#e8f6fd" />
            <path d="M23 3l5 3v6h-6z" fill="#f0a028" />
            <path d="M2 10h12l3 3h11v11q0 4-4 4H6q-4 0-4-4z" fill="#5a5a5a" />
            <rect x="9" y="23" width="12" height="3" rx="1" fill="#222" />
            <rect x="13" y="23.800" width="6" height="1.400" fill="#ddd" />
            <text x="5" y="20.500" fontFamily="DejaVu Sans" fontSize="7" fill="#111">DOC</text>
          </svg>
        </Tile>
        <Tile>
          <span className="flex h-[32px] w-[32px] items-center justify-center rounded-[6px] bg-white">
            <svg viewBox="0 0 32 32" className="h-[32px] w-[32px]">
              <text x="16" y="21" textAnchor="middle" fontFamily="Open Sans, sans-serif" fontWeight="800" fontSize="27" fill="#000">a</text>
              <path d="M4 23c7 6 16 6 22 1.500" fill="none" stroke="#f29a1f" strokeWidth="2.400" />
              <path d="M23 22.500l5.500-.5-1.500 5.500z" fill="#f29a1f" />
            </svg>
          </span>
        </Tile>
        <Tile>
          <svg viewBox="0 0 32 32" className={big}>
            <rect width="32" height="32" rx="2" fill="#11486f" />
            <path d="M5 6c5-2 9 0 11 5 3 7 6 6 7 13l3 4M5 6c2 2 1 5 3 8 1 4-1 6 1 9l3-3c1 3 4 3 6 8" fill="none" stroke="#d8e8f2" strokeWidth="1.300" />
            <path d="M20 7l4-4 1 3 4 1-5 4z" fill="#d0dce4" />
          </svg>
        </Tile>
        <Tile open="border border-[#e9eedb] bg-[#dfe6c4]/55">
          <svg viewBox="0 0 30 30" className="h-[30px] w-[30px]">
            <circle cx="15" cy="15" r="15" fill="#fdd13c" />
            <path d="M15 15L2 7.500A15 15 0 0 1 28 7.500H15z" fill="#de4334" />
            <path d="M2 7.500A15 15 0 0 0 14 30l7-11.500-6-3.500-6.500 3.500z" fill="#2aa152" />
            <path d="M15 8h13.300A15 15 0 0 1 14 30l7-11z" fill="#fdd13c" />
            <circle cx="15" cy="15" r="7" fill="#fff" />
            <circle cx="15" cy="15" r="5.500" fill="#4582ee" />
          </svg>
        </Tile>
        <Tile>
          <svg viewBox="0 0 32 32" className={big}>
            <path
              d="M23 1l8 3v24l-8 3L10.500 19 4.500 24 2 22.500v-13L4.500 8l6 5zM23 10.500V21.500L15.500 16zM5 12.500v7L8.500 16z"
              fill="#7f56b8"
              fillRule="evenodd"
            />
          </svg>
        </Tile>
        <Tile>
          <svg viewBox="0 0 32 32" className={big}>
            <path d="M1 4v15c0 4 17 4 17 0V4z" fill="#f2b51c" />
            <ellipse cx="9.500" cy="4" rx="8.500" ry="3" fill="#fbdc70" />
            <path d="M23 3h7v8M1 23v8h7" fill="none" stroke="#48b648" strokeWidth="1.800" />
            <path d="M14 17l12 12M27 17L14 30" stroke="#e8e8e8" strokeWidth="3.800" />
            <path d="M14 17l12 12M27 17L14 30" stroke="#3b3b3b" strokeWidth="2" />
            <path d="M25 14l-1 4 4 2 3-2" fill="none" stroke="#444" strokeWidth="1.800" />
          </svg>
        </Tile>
        <Tile open="border border-[#bcc99c]/70 bg-[#dfe6c4]/35">
          <svg viewBox="0 0 32 32" className={big}>
            <path d="M18 3C6 3 1 12 2 20c1 8 13 10 19 8 8-3 3-8 6-12S28 3 18 3z" fill="#cfe3f0" stroke="#8fb2ca" />
            <circle cx="15" cy="8" r="2.800" fill="#3f9ad8" />
            <circle cx="8" cy="12" r="2.800" fill="#e2c22d" />
            <circle cx="6" cy="19" r="2.800" fill="#d63a2e" />
            <circle cx="14" cy="22" r="3" fill="#4b7f9e" />
            <circle cx="22" cy="9" r="2.500" fill="#5db441" />
            <path d="M29 1l2 7-10 21-3 2 1-4z" fill="#d98532" />
            <path d="M29 1l2 7-3 1-2-1z" fill="#a86a3a" />
          </svg>
        </Tile>
        <div className="ml-auto flex h-full items-center text-white">
          <svg viewBox="0 0 30 18" className="h-[18px] w-[30px]">
            <rect x=".8" y=".8" width="28.400" height="16.400" rx="1" fill="#38441c" stroke="#fff" strokeWidth="1.600" />
            <path d="M3 5h24M3 8.500h24M3 12h24" stroke="#fff" strokeWidth="2" strokeDasharray="2.200 1" />
            <path d="M7 14.500h16" stroke="#fff" strokeWidth="1.500" />
          </svg>
          <Caret className="ml-[13px] rotate-180 text-white" />
          <svg viewBox="0 0 16 18" className="ml-[13px] h-[16px] w-[16px]">
            <path d="M3 2v9l5 4 5-4V2L8 6z" fill="none" stroke="#8c8f7c" strokeWidth="3" />
            <path d="M12 9l4 7H8z" fill="#d8232a" />
          </svg>
          <svg viewBox="0 0 10 14" className="ml-[14px] h-[14px] w-[10px]">
            <path d="M3 0h4v2h2v11.300H1V2h2z" fill="#33401a" stroke="#fff" strokeWidth="1.300" />
            <path d="M3 7h4v4.500H3z" fill="#fff" />
          </svg>
          <svg viewBox="0 0 16 11" className="ml-[9px] h-[11px] w-[16px]" fill="#fff">
            <path d="M0 11V9h2v2zM3.400 11V7h2v4zM6.800 11V5h2v6zM10.200 11V2.500h2V11zM13.600 11V0h2v11z" />
          </svg>
          <svg viewBox="0 0 16 14" className="ml-[8px] h-[13px] w-[15px]" fill="none" stroke="#fff" strokeWidth="1.200">
            <path d="M1 5h3l3-3.500v11L4 9H1z" fill="#fff" />
            <path d="M9 4.500q2 2.500 0 5M11 2.700q3.500 4.300 0 8.600M13 1q5 6 0 12" />
          </svg>
          <span className="ml-[13px] font-['Open_Sans',sans-serif] text-[11.700px] tracking-[-0.300px]">ENG</span>
          <span className="ml-[4px] flex w-[78px] flex-col items-center font-['Open_Sans',sans-serif] text-[11.500px] leading-[17px] tracking-[-0.400px]">
            <span>6:26 PM</span>
            <span>9/28/2019</span>
          </span>
          <span className="w-[3px]" />
        </div>
      </div>
    </footer>
  );
}

export default function App() {
  return (
    <div className="relative flex h-[768px] w-[1366px] flex-col overflow-hidden bg-white font-['Liberation_Sans',Arial,sans-serif]">
      <Browser />
      <div className="flex h-[658px] shrink-0 border-t border-[#8e9090]">
        <div className={`flex w-[1195px] shrink-0 flex-col ${linen}`}>
          <TopBar />
          <div className="flex h-[611px] shrink-0 pt-[5px] pl-[5px]">
            <SideNav />
            <Dashboard />
          </div>
          <div className="flex h-[19px] shrink-0 items-center justify-between bg-[#323232] pr-[7px] pl-[513px] text-[12.700px] text-[#7b7b7b]">
            <span>© Ábaco 2006 - 2019 | Revisión: 4521</span>
            <span>Powered by: Flaro Sistemas</span>
          </div>
        </div>
        <Users />
      </div>
      <Taskbar />
      <EgresosDialog />
      <NuevoEgreso />
      <div className="absolute top-[701px] left-[9px] flex h-[27px] w-[167px] items-center overflow-hidden rounded-t-[3px] bg-[#2a9b35] text-white">
        <span className="flex h-full w-[32px] items-center justify-center bg-[#188a2c]">
          <svg viewBox="0 0 16 12" className="h-[12px] w-[15px]">
            <rect width="16" height="12" rx="2" fill="#fff" />
            <path d="M1.500 1.500L8 7l6.500-5.500" fill="none" stroke="#188a2c" strokeWidth="1.300" />
          </svg>
        </span>
        <span className="ml-[9px] font-['DejaVu_Sans',sans-serif] text-[11px] font-bold whitespace-nowrap">Deje su mensaje</span>
      </div>
    </div>
  );
}
